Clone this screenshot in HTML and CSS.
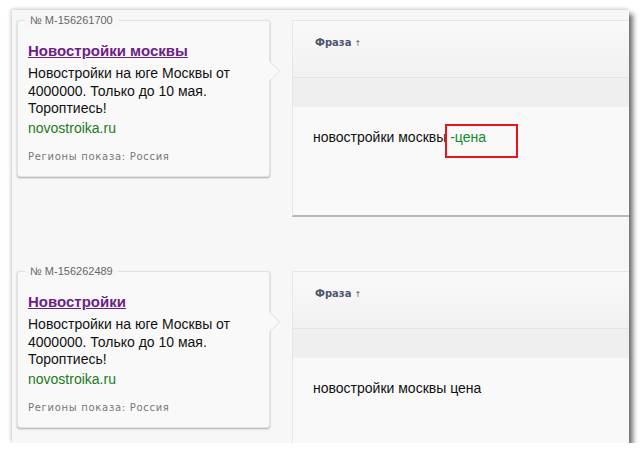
FILE: index.html
```html
<!DOCTYPE html>
<html lang="ru">
<head>
    <meta charset="UTF-8">
    <title>Объявления и фразы</title>
    <link rel="stylesheet" href="styles.css">
</head>
<body>
    <div class="frame">
        <!-- Первое объявление -->
        <div class="block">
            <div class="card">
                <span class="card-num">№ M-156261700</span>
                <a class="card-title" href="#">Новостройки москвы</a>
                <p class="card-text">Новостройки на юге Москвы от 4000000. Только до 10 мая. Тороптиесь!</p>
                <div class="card-url">novostroika.ru</div>
                <div class="card-regions">Регионы показа: Россия</div>
            </div>
            <div class="panel">
                <div class="panel-head">Фраза<span class="sort">↑</span></div>
                <div class="panel-band"></div>
                <div class="panel-body">новостройки москвы <span class="minus">-цена</span></div>
            </div>
        </div>

        <!-- Второе объявление -->
        <div class="block">
            <div class="card">
                <span class="card-num">№ M-156262489</span>
                <a class="card-title" href="#">Новостройки</a>
                <p class="card-text">Новостройки на юге Москвы от 4000000. Только до 10 мая. Тороптиесь!</p>
                <div class="card-url">novostroika.ru</div>
                <div class="card-regions">Регионы показа: Россия</div>
            </div>
            <div class="panel panel-open">
                <div class="panel-head">Фраза<span class="sort">↑</span></div>
                <div class="panel-band"></div>
                <div class="panel-body">новостройки москвы цена</div>
            </div>
        </div>
    </div>
</body>
</html>
```

FILE: styles.css
```css
/* Общая рамка скриншота */
body {
    margin: 0;
    background: #fff;
    font-family: "Liberation Sans", Arial, sans-serif;
}

.frame {
    margin: 10px 0 0 12px;
    width: 617px;
    height: 433px;
    background: #f7f7f7;
    overflow: hidden;
    box-shadow: 4px 4px 5px rgba(0, 0, 0, 0.55), -1px -1px 4px rgba(0, 0, 0, 0.2);
    padding: 10px 0 0 5px;
    box-sizing: border-box;
}

.block {
    display: flex;
    align-items: flex-start;
    gap: 22px;
    margin-bottom: 54px;
}

/* Карточка объявления */
.card {
    position: relative;
    flex: none;
    width: 253px;
    box-sizing: border-box;
    padding: 20px 10px 12px;
    background: #f9f9f9;
    border: 1px solid #e2e2e2;
    border-radius: 3px;
    box-shadow: 0 1px 2px rgba(0, 0, 0, 0.3);
}

/* стрелка справа */
.card::before,
.card::after {
    content: "";
    position: absolute;
    top: 40px;
    right: -11px;
    border: 10px solid transparent;
    border-right: 0;
    border-left: 10px solid #dedede;
}

.card::after {
    right: -10px;
    border-left-color: #f9f9f9;
}

.card-num {
    position: absolute;
    top: -8px;
    left: 7px;
    padding: 0 5px;
    background: #f7f7f7;
    font-size: 11px;
    line-height: 14px;
    color: #666;
}

.card-title {
    display: block;
    font-size: 15px;
    font-weight: bold;
    line-height: 20px;
    color: #6d1f86;
    text-decoration: underline;
}

.card-text {
    margin: 4px 0 0;
    font-size: 14px;
    line-height: 17.5px;
    color: #111;
}

.card-url {
    margin-top: 2px;
    font-size: 14px;
    line-height: 17px;
    color: #1c7a1c;
}

.card-regions {
    margin-top: 13px;
    font-family: "DejaVu Sans", sans-serif;
    font-size: 10px;
    line-height: 14px;
    letter-spacing: 0.7px;
    color: #777;
}

/* Таблица фраз */
.panel {
    flex: 1;
    margin-right: -20px;
    height: 197px;
    box-sizing: border-box;
    background: #f9f9f9;
    border: 1px solid #e6e6e6;
    border-bottom: 2px solid #b8b8b8;
}

.panel-open {
    height: 240px;
    border-bottom: 0;
}

.panel-head {
    height: 57px;
    box-sizing: border-box;
    padding: 15px 22px 0;
    background: linear-gradient(#f9f9f9, #f1f1f1);
    border-bottom: 1px solid #e4e4e4;
    font-family: "DejaVu Sans", sans-serif;
    font-size: 10px;
    font-weight: bold;
    line-height: 14px;
    color: #50566e;
}

.sort {
    margin-left: 3px;
    font-size: 8px;
    font-weight: normal;
}

.panel-band {
    height: 29px;
    background: #efefef;
}

.panel-body {
    padding: 21px 20px 0;
    font-size: 14px;
    line-height: 18px;
    color: #111;
}

.minus {
    position: relative;
    color: #128a2a;
}

/* красная рамка-выделение */
.minus::after {
    content: "";
    position: absolute;
    left: -5px;
    top: -5px;
    width: 69px;
    height: 30px;
    border: 2px solid #e8141e;
}
```
